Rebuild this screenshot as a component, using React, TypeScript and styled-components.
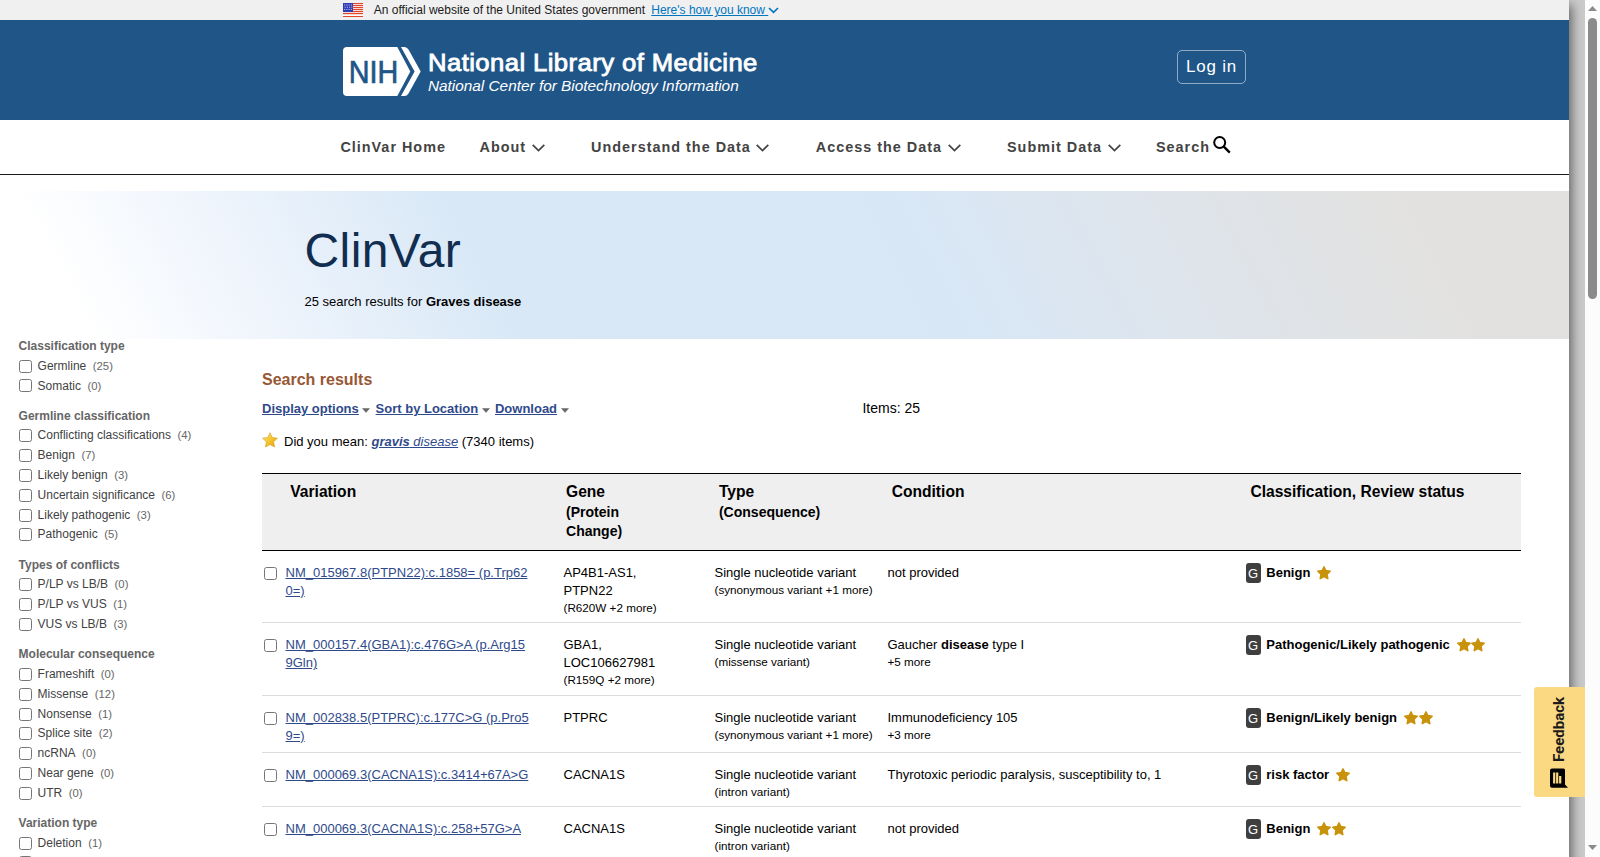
import React from 'react';
import styled, { createGlobalStyle } from 'styled-components';

const Global = createGlobalStyle`
  *, *::before, *::after { box-sizing: border-box; }
  html, body { margin: 0; padding: 0; overflow: hidden; }
  body { font-family: "Liberation Sans", Arial, sans-serif; font-size: 13px; color: #000; background: #c8c8c8; }
`;

const Screen = styled.div`
  position: relative;
  display: flex;
  justify-content: space-between;
  height: 857px;
  overflow: hidden;
  background: #cacaca;
`;

const Page = styled.div`
  width: 1569px;
  height: 877px;
  flex: none;
  background: #fff;
  box-shadow: 2px 6px 10px 1px #666;
`;

const GovBanner = styled.div`
  display: flex;
  align-items: center;
  height: 20px;
  padding-left: 343px;
  background: #f0f0f0;
  font-size: 12px;
  color: #1b1b1b;
  svg { flex: none; display: block; }
`;

const GovText = styled.span`
  margin: 0 6.2px 0 10.8px;
`;

const GovLink = styled.a`
  color: #0076c0;
  text-decoration: underline;
  white-space: pre;
`;

const Header = styled.header`
  display: flex;
  align-items: flex-start;
  justify-content: space-between;
  height: 100px;
  padding: 27px 323px 0 343px;
  background: #205588;
`;

const LoginButton = styled.button`
  width: 69px;
  height: 34px;
  margin-top: 3px;
  padding: 0 0 1px 0;
  border: 1px solid rgba(255, 255, 255, 0.5);
  border-radius: 5px;
  background: transparent;
  color: #fff;
  font: 16.96px "Liberation Sans", Arial, sans-serif;
  letter-spacing: 0.8px;
  white-space: nowrap;
`;

const Nav = styled.nav`
  display: flex;
  align-items: center;
  height: 55px;
  padding-left: 340.4px;
  border-bottom: 1px solid #1b1b1b;
`;

const NavItem = styled.a<{ $gap: number }>`
  display: flex;
  align-items: center;
  margin-right: ${(p) => p.$gap}px;
  color: #434343;
  font-size: 14.4px;
  font-weight: 700;
  letter-spacing: 1px;
  white-space: nowrap;
`;

const NavChevron = styled.svg`
  width: 13px;
  height: 8px;
  margin: 1px 0 0 5.6px;
`;

const SearchIcon = styled.svg`
  width: 18px;
  height: 18px;
  margin: -5px 0 0 2.6px;
`;

const Hero = styled.section`
  height: 148px;
  margin-top: 16px;
  padding: 32px 0 0 304.5px;
  background: linear-gradient(62deg, #fff 5.5%, #eef4fc 17.5%, #d8e8f6 32%, #d8e7f6 59%, #dfe4ea 76%, #e2e1df 90%);
`;

const HeroTitle = styled.h1`
  margin: 0;
  font-size: 48px;
  font-weight: 400;
  letter-spacing: 0.4px;
  line-height: 56px;
  color: #112e51;
`;

const HeroText = styled.p`
  margin: 15px 0 0;
  line-height: 16px;
`;

const Body = styled.div`
  display: flex;
`;

const Sidebar = styled.aside`
  width: 262px;
  flex: none;
  margin-top: -3.6px;
  padding-left: 18.6px;
  font-size: 12px;
`;

const FacetGroup = styled.section`
  margin-bottom: 9.4px;
`;

const FacetTitle = styled.h3`
  margin: 0;
  padding-top: 1.6px;
  font-size: 12px;
  line-height: 19.2px;
  color: #666;
`;

const FacetRow = styled.label`
  display: flex;
  align-items: center;
  height: 19.8px;
  white-space: nowrap;
`;

const Check = styled.input`
  width: 13px;
  height: 13px;
  flex: none;
  margin: 0;
`;

const FacetName = styled.span`
  margin-left: 6px;
  padding-top: 1px;
  line-height: 19.8px;
  color: #424242;
`;

const FacetCount = styled.span`
  margin-left: 6.5px;
  font-size: 11.3px;
  line-height: 12px;
  color: #666;
`;

const Main = styled.main`
  width: 1259px;
  flex: none;
  padding-top: 31px;
`;

const ResultsTitle = styled.h2`
  margin: 0;
  font-size: 16px;
  line-height: 20px;
  color: #985735;
`;

const Toolbar = styled.div`
  display: flex;
  align-items: center;
  height: 18px;
  margin-top: 9.5px;
`;

const ToolLink = styled.a`
  color: #2f4a8b;
  font-weight: 700;
  text-decoration: underline;
`;

const Caret = styled.svg`
  width: 8px;
  height: 5px;
  margin: 3px 5.3px 0 3.5px;
`;

const ItemCount = styled.span`
  margin-left: 288.6px;
  padding-bottom: 1px;
  font-size: 14px;
  line-height: 16px;
`;

const Suggestion = styled.div`
  display: flex;
  align-items: center;
  height: 20px;
  margin: 13.5px 0 22px;
  white-space: pre;
  svg { margin: -3px 6px 0 0; flex: none; }
  a { color: #2f4a8b; text-decoration: underline; font-style: italic; }
`;

const gridColumns = '23.5px 278px 151px 173px 358.5px 1fr';

const TableHead = styled.div`
  display: grid;
  grid-template-columns: ${gridColumns};
  height: 78px;
  padding-top: 8px;
  border-top: 1px solid #000;
  border-bottom: 1px solid #000;
  background: #efefef;
  font-size: 15.6px;
  font-weight: 700;
  line-height: 20px;
`;

const HeadCell = styled.div<{ $pad: number }>`
  padding-left: ${(p) => p.$pad}px;
  white-space: nowrap;
`;

const HeadSub = styled.div`
  width: 90px;
  padding-top: 1px;
  font-size: 14.04px;
  line-height: 19px;
  white-space: normal;
`;

const Row = styled.div<{ $height: number }>`
  display: grid;
  grid-template-columns: ${gridColumns};
  height: ${(p) => p.$height}px;
  padding-top: 13px;
  border-bottom: 1px solid #dcdcdc;
  line-height: 18px;
`;

const CheckCell = styled.div`
  padding: 3px 0 0 2px;
  line-height: 0;
`;

const Cell = styled.div`
  white-space: nowrap;
`;

const VariantLink = styled.a`
  color: #2f4a8b;
  text-decoration: underline;
`;

const Small = styled.div`
  font-size: 11.7px;
  line-height: 15px;
`;

const StatusCell = styled.div`
  display: flex;
  align-items: flex-start;
  font-weight: 700;
  white-space: nowrap;
`;

const Badge = styled.span`
  width: 15px;
  height: 20px;
  margin: -1px 5.3px 0 0;
  border-radius: 3px;
  background: #3f3f3f;
  color: #fff;
  font-weight: 400;
  line-height: 21px;
  text-align: center;
  text-indent: -1px;
`;

const Stars = styled.span`
  display: flex;
  gap: 0.8px;
  margin: 2px 0 0 6.8px;
  svg { display: block; }
`;

const Feedback = styled.button`
  position: absolute;
  left: 1534px;
  top: 687px;
  display: flex;
  flex-direction: column;
  align-items: center;
  width: 51px;
  height: 110px;
  padding: 9px 1px 0 0;
  border: 0;
  border-radius: 3px 0 0 3px;
  background: #fbd983;
  color: #1b1b1b;
  font: 700 15px Roboto, "Liberation Sans", sans-serif;
  svg { flex: none; }
`;

const FeedbackLabel = styled.span`
  flex: none;
  height: 67px;
  margin-bottom: 5px;
  writing-mode: vertical-rl;
  transform: rotate(180deg);
  line-height: 18px;
  text-align: center;
`;

const Scrollbar = styled.div`
  display: flex;
  flex-direction: column;
  align-items: center;
  width: 15px;
  height: 857px;
  flex: none;
  padding: 6px 0 7px;
  background: #fcfcfc;
  z-index: 1;
  svg { display: block; flex: none; }
`;

const Thumb = styled.div`
  width: 9px;
  height: 281px;
  margin: 7px 0 auto;
  border-radius: 5px;
  background: #8b8b8b;
`;

const Star = () => (
  <svg width="14" height="14" viewBox="0 0 14 14">
    <path
      d="M7 .9 8.800 4.600l4.400.6-3.200 3 .8 4.500L7 10.600l-3.800 2.100.8-4.500-3.200-3 4.400-.6z"
      fill="#c8930b"
      stroke="#c8930b"
      strokeWidth="1.500"
      strokeLinejoin="round"
    />
  </svg>
);

const Flag = () => (
  <svg width="20" height="14" viewBox="0 0 20 14">
    <rect width="20" height="14" fill="#fff" />
    {[0, 2, 4, 6, 8, 10, 13].map((y) => (
      <rect key={y} y={y} width="20" height="1" fill="#e3462a" />
    ))}
    {[0, 2, 4, 6, 8, 10].map((y) => (
      <rect key={y} y={y + 1} width="20" height=".4" fill="#f0a090" />
    ))}
    <rect width="10" height="9" fill="#2f3bb5" />
    {[1.5, 3.7, 5.9].map((y, r) =>
      [1.2, 3.4, 5.6, 7.8].map((x) => (
        <rect key={`${x}-${y}`} x={x + (r % 2) * 0.5} y={y} width="1" height="1" fill="#cfd3f3" />
      ))
    )}
  </svg>
);

const Logo = () => (
  <svg width="420" height="50" viewBox="0 0 420 50" fontFamily='"Liberation Sans", Arial, sans-serif'>
    <path d="M4 0H54.300L67.300 24.500 54.300 49H4a4 4 0 0 1-4-4V4a4 4 0 0 1 4-4z" fill="#fff" />
    <path d="M58 0h3.500q2.500 0 4 2.500L77.700 24.500 65.500 46.500q-1.500 2.500-4 2.500H58L71.600 24.500z" fill="#fff" />
    <text x="5.800" y="35.600" fontSize="32" textLength="49.500" lengthAdjust="spacingAndGlyphs" fill="#205588" stroke="#205588" strokeWidth=".7">NIH</text>
    <text x="85" y="24.200" fontSize="24.600" letterSpacing=".4" textLength="329.800" lengthAdjust="spacingAndGlyphs" fill="#fff" stroke="#fff" strokeWidth=".85">National Library of Medicine</text>
    <text x="84.900" y="44" fontSize="15.200" fontStyle="italic" textLength="310.800" lengthAdjust="spacingAndGlyphs" fill="#fff">National Center for Biotechnology Information</text>
  </svg>
);

const nav = [
  { label: 'ClinVar Home', gap: 33.6 },
  { label: 'About', menu: true, gap: 46.4 },
  { label: 'Understand the Data', menu: true, gap: 46.4 },
  { label: 'Access the Data', menu: true, gap: 46.4 },
  { label: 'Submit Data', menu: true, gap: 35.4 },
];

const facets: { title: string; items: [string, number][] }[] = [
  { title: 'Classification type', items: [['Germline', 25], ['Somatic', 0]] },
  {
    title: 'Germline classification',
    items: [['Conflicting classifications', 4], ['Benign', 7], ['Likely benign', 3], ['Uncertain significance', 6], ['Likely pathogenic', 3], ['Pathogenic', 5]],
  },
  { title: 'Types of conflicts', items: [['P/LP vs LB/B', 0], ['P/LP vs VUS', 1], ['VUS vs LB/B', 3]] },
  {
    title: 'Molecular consequence',
    items: [['Frameshift', 0], ['Missense', 12], ['Nonsense', 1], ['Splice site', 2], ['ncRNA', 0], ['Near gene', 0], ['UTR', 0]],
  },
  { title: 'Variation type', items: [['Deletion', 1]] },
];

interface Variant {
  name: string[];
  genes: string[];
  protein?: string;
  consequence: string;
  condition: React.ReactNode;
  more?: string;
  status: string;
  stars: number;
  height: number;
}

const variants: Variant[] = [
  { name: ['NM_015967.8(PTPN22):c.1858= (p.Trp62', '0=)'], genes: ['AP4B1-AS1,', 'PTPN22'], protein: '(R620W +2 more)', consequence: '(synonymous variant +1 more)', condition: 'not provided', status: 'Benign', stars: 1, height: 72 },
  { name: ['NM_000157.4(GBA1):c.476G>A (p.Arg15', '9Gln)'], genes: ['GBA1,', 'LOC106627981'], protein: '(R159Q +2 more)', consequence: '(missense variant)', condition: <>Gaucher <b>disease</b> type I</>, more: '+5 more', status: 'Pathogenic/Likely pathogenic', stars: 2, height: 73 },
  { name: ['NM_002838.5(PTPRC):c.177C>G (p.Pro5', '9=)'], genes: ['PTPRC'], consequence: '(synonymous variant +1 more)', condition: 'Immunodeficiency 105', more: '+3 more', status: 'Benign/Likely benign', stars: 2, height: 57 },
  { name: ['NM_000069.3(CACNA1S):c.3414+67A>G'], genes: ['CACNA1S'], consequence: '(intron variant)', condition: 'Thyrotoxic periodic paralysis, susceptibility to, 1', status: 'risk factor', stars: 1, height: 54 },
  { name: ['NM_000069.3(CACNA1S):c.258+57G>A'], genes: ['CACNA1S'], consequence: '(intron variant)', condition: 'not provided', status: 'Benign', stars: 2, height: 54 },
];

const DownCaret = () => (
  <Caret viewBox="0 0 8 5">
    <path d="M.5.500h7L4 4.500z" fill="#666" stroke="#666" strokeWidth=".5" />
  </Caret>
);

export default function App() {
  return (
    <Screen>
      <Global />
      <Page>
        <GovBanner>
          <Flag />
          <GovText>An official website of the United States government</GovText>
          <GovLink>{"Here's how you know "}</GovLink>
          <svg width="11" height="7" viewBox="0 0 11 7">
            <path d="M1 1l4.500 4.300L10 1" fill="none" stroke="#0076c0" strokeWidth="1.700" />
          </svg>
        </GovBanner>
        <Header>
          <Logo />
          <LoginButton>Log in</LoginButton>
        </Header>
        <Nav>
          {nav.map((n) => (
            <NavItem key={n.label} $gap={n.gap}>
              {n.label}
              {n.menu && (
                <NavChevron viewBox="0 0 13 8">
                  <path d="M.7.800 6.500 6.500 12.300.800" fill="none" stroke="#434343" strokeWidth="1.700" />
                </NavChevron>
              )}
            </NavItem>
          ))}
          <NavItem $gap={0}>
            Search
            <SearchIcon viewBox="0 0 18 18">
              <circle cx="6.700" cy="6.500" r="5.500" fill="none" stroke="#000" strokeWidth="2" />
              <path d="M10.800 10.600l6 6" stroke="#000" strokeWidth="2.400" />
            </SearchIcon>
          </NavItem>
        </Nav>
        <Hero>
          <HeroTitle>ClinVar</HeroTitle>
          <HeroText>25 search results for <b>Graves disease</b></HeroText>
        </Hero>
        <Body>
          <Sidebar>
            {facets.map((f, i) => (
              <FacetGroup key={f.title}>
                <FacetTitle>{f.title}</FacetTitle>
                {f.items.map(([name, count]) => (
                  <FacetRow key={name}>
                    <Check type="checkbox" />
                    <FacetName>
                      {name}
                      <FacetCount>({count})</FacetCount>
                    </FacetName>
                  </FacetRow>
                ))}
                {i === facets.length - 1 && <FacetRow><Check type="checkbox" /></FacetRow>}
              </FacetGroup>
            ))}
          </Sidebar>
          <Main>
            <ResultsTitle>Search results</ResultsTitle>
            <Toolbar>
              <ToolLink>Display options</ToolLink>
              <DownCaret />
              <ToolLink>Sort by Location</ToolLink>
              <DownCaret />
              <ToolLink>Download</ToolLink>
              <DownCaret />
              <ItemCount>Items: 25</ItemCount>
            </Toolbar>
            <Suggestion>
              <svg width="16" height="16" viewBox="0 0 16 16">
                <defs>
                  <linearGradient id="gold" x1="0" y1="0" x2="1" y2="1">
                    <stop offset="0" stopColor="#ffe98a" />
                    <stop offset=".5" stopColor="#f7c52d" />
                    <stop offset="1" stopColor="#e09a10" />
                  </linearGradient>
                </defs>
                <path d="M8 .8l2.200 4.700 5.200.7-3.800 3.600.9 5.200L8 12.500l-4.500 2.500.9-5.200L.6 6.200l5.200-.7z" fill="url(#gold)" stroke="#d9a322" strokeWidth=".7" strokeLinejoin="round" />
              </svg>
              {'Did you mean: '}
              <a><b>gravis</b> disease</a>
              {' (7340 items)'}
            </Suggestion>
            <TableHead>
              <span />
              <HeadCell $pad={4.8}>Variation</HeadCell>
              <HeadCell $pad={2.5}>Gene<HeadSub>(Protein Change)</HeadSub></HeadCell>
              <HeadCell $pad={4.4}>Type<HeadSub>(Consequence)</HeadSub></HeadCell>
              <HeadCell $pad={4.2}>Condition</HeadCell>
              <HeadCell $pad={4.4}>Classification, Review status</HeadCell>
            </TableHead>
            {variants.map((v) => (
              <Row key={v.name[0]} $height={v.height}>
                <CheckCell><Check type="checkbox" /></CheckCell>
                <Cell>
                  <VariantLink>
                    {v.name[0]}
                    {v.name[1] && <><br />{v.name[1]}</>}
                  </VariantLink>
                </Cell>
                <Cell>
                  {v.genes.map((g) => <div key={g}>{g}</div>)}
                  {v.protein && <Small>{v.protein}</Small>}
                </Cell>
                <Cell>Single nucleotide variant<Small>{v.consequence}</Small></Cell>
                <Cell>{v.condition}{v.more && <Small>{v.more}</Small>}</Cell>
                <StatusCell>
                  <Badge>G</Badge>
                  {v.status}
                  <Stars>{Array.from({ length: v.stars }, (_, i) => <Star key={i} />)}</Stars>
                </StatusCell>
              </Row>
            ))}
          </Main>
        </Body>
      </Page>
      <Feedback>
        <FeedbackLabel>Feedback</FeedbackLabel>
        <svg width="20" height="20" viewBox="0 0 20 20">
          <path d="M3 .500h11.500a1.500 1.500 0 0 1 1.500 1.500v14.500l3 3.200H3a2 2 0 0 1-2-2V2.500a2 2 0 0 1 2-2z" fill="#000" />
          <path d="M5.200 15.500V4.500M8.200 15.500V4.500M11.200 15.500V8" stroke="#fbd983" strokeWidth="2.200" />
        </svg>
      </Feedback>
      <Scrollbar>
        <svg width="9" height="5" viewBox="0 0 9 5"><path d="M4.500 0 9 5H0z" fill="#8b8b8b" /></svg>
        <Thumb />
        <svg width="9" height="5" viewBox="0 0 9 5"><path d="M4.500 5 9 0H0z" fill="#8b8b8b" /></svg>
      </Scrollbar>
    </Screen>
  );
}
